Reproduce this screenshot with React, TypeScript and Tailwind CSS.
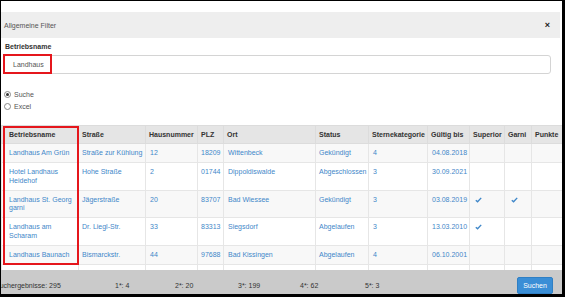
import React from 'react';

interface Row {
    name: string[];
    street: string;
    nr: string;
    plz: string;
    ort: string;
    status: string;
    stars: string;
    until: string;
    superior: boolean;
    garni: boolean;
}

const rows: Row[] = [
    { name: ['Landhaus Am Grün'], street: 'Straße zur Kühlung', nr: '12', plz: '18209', ort: 'Wittenbeck', status: 'Gekündigt', stars: '4', until: '04.08.2018', superior: false, garni: false },
    { name: ['Hotel Landhaus', 'Heidehof'], street: 'Hohe Straße', nr: '2', plz: '01744', ort: 'Dippoldiswalde', status: 'Abgeschlossen', stars: '3', until: '30.09.2021', superior: false, garni: false },
    { name: ['Landhaus St. Georg', 'garni'], street: 'Jägerstraße', nr: '20', plz: '83707', ort: 'Bad Wiessee', status: 'Gekündigt', stars: '3', until: '03.08.2019', superior: true, garni: true },
    { name: ['Landhaus am', 'Scharam'], street: 'Dr. Liegl-Str.', nr: '33', plz: '83313', ort: 'Siegsdorf', status: 'Abgelaufen', stars: '3', until: '13.03.2010', superior: true, garni: false },
    { name: ['Landhaus Baunach'], street: 'Bismarckstr.', nr: '44', plz: '97688', ort: 'Bad Kissingen', status: 'Abgelaufen', stars: '4', until: '06.10.2001', superior: false, garni: false },
    { name: ['Hotel Landhaus', 'Wildenburg'], street: 'Crottorfer Straße', nr: '57', plz: '51580', ort: 'Reichshof', status: 'Gekündigt', stars: '3', until: '30.04.2008', superior: true, garni: false },
];

const headers = ['Betriebsname', 'Straße', 'Hausnummer', 'PLZ', 'Ort', 'Status', 'Sternekategorie', 'Gültig bis', 'Superior', 'Garni', 'Punkte'];

const Check = () => (
    <svg width="7" height="6" viewBox="0 0 7 6" className="inline-block">
        <path d="M0.8 3.2 L2.6 4.8 L6.2 0.9" fill="none" stroke="#3f87c9" strokeWidth="1.4" />
    </svg>
);

export default function App() {
    const cell = 'border border-[#e6e6e6] px-[3px] pt-[5px] pb-[4.5px] leading-[8.5px] align-top text-[#3f87c9] font-normal';

    return (
        <div className="relative w-[565px] h-[297px] overflow-hidden bg-black font-['Liberation_Sans',Arial,sans-serif] text-[7px] leading-[9px]">
            <div className="ml-[1px] mt-[1px] w-[561px] h-[293px] bg-white flex flex-col overflow-hidden">
                {/* Modal header */}
                <div className="mt-[11px] h-[26px] w-[559px] bg-[#eeeeee] flex items-center justify-between pl-[3px] pr-[10px] text-[#555]">
                    <span>Allgemeine Filter</span>
                    <span className="text-[9px] font-bold text-[#222]">×</span>
                </div>

                <div className="mt-[4px] pl-[4px] h-[9px] font-bold text-[#333]">Betriebsname</div>
                <div className="mt-[4px] ml-[2px] w-[548px] h-[19px] border border-[#d4d4d4] rounded-[3px] flex items-center pl-[9px] text-[#555]">
                    Landhaus
                </div>

                {/* Radios */}
                <div className="mt-[15px] pl-[3px] flex flex-col gap-[2px] text-[#555]">
                    <label className="flex items-center h-[10px]">
                        <span className="w-[7px] h-[7px] rounded-full border border-[#888] flex items-center justify-center mr-[3px]">
                            <span className="w-[3px] h-[3px] rounded-full bg-[#333]"></span>
                        </span>
                        Suche
                    </label>
                    <label className="flex items-center h-[10px]">
                        <span className="w-[7px] h-[7px] rounded-full border border-[#888] mr-[3px]"></span>
                        Excel
                    </label>
                </div>

                {/* Result table */}
                <div className="mt-[14px] h-[145px] overflow-hidden">
                    <table className="table-fixed w-[561px] border-collapse">
                        <colgroup>
                            <col className="w-[77px]" />
                            <col className="w-[67px]" />
                            <col className="w-[52px]" />
                            <col className="w-[26px]" />
                            <col className="w-[92px]" />
                            <col className="w-[53px]" />
                            <col className="w-[59px]" />
                            <col className="w-[42px]" />
                            <col className="w-[35px]" />
                            <col className="w-[27px]" />
                            <col className="w-[31px]" />
                        </colgroup>
                        <thead>
                            <tr className="bg-[#e5e5e5] h-[18px]">
                                {headers.map((h, i) => (
                                    <th key={h} className={`border border-[#dcdcdc] py-0 text-left font-bold text-[#333] whitespace-nowrap ${i === 0 ? 'pl-[7px]' : 'pl-[3px]'}`}>
                                        {h}
                                    </th>
                                ))}
                            </tr>
                        </thead>
                        <tbody>
                            {rows.map((r, i) => (
                                <tr key={r.plz} className={i % 2 === 0 ? 'bg-[#f8f8f8]' : 'bg-white'}>
                                    <td className={`${cell} pl-[7px]`}>
                                        {r.name.map((n) => (
                                            <div key={n}>{n}</div>
                                        ))}
                                    </td>
                                    <td className={`${cell} whitespace-nowrap`}>{r.street}</td>
                                    <td className={`${cell} pl-[4px]`}>{r.nr}</td>
                                    <td className={cell}>{r.plz}</td>
                                    <td className={`${cell} pl-[4px]`}>{r.ort}</td>
                                    <td className={cell}>{r.status}</td>
                                    <td className={`${cell} pl-[4px]`}>{r.stars}</td>
                                    <td className={`${cell} pl-[4px]`}>{r.until}</td>
                                    <td className={`${cell} pl-[5px]`}>{r.superior && <Check />}</td>
                                    <td className={`${cell} pl-[6px]`}>{r.garni && <Check />}</td>
                                    <td className={cell}></td>
                                </tr>
                            ))}
                        </tbody>
                    </table>
                </div>

                {/* Footer */}
                <div className="flex-1 bg-[#cacaca] flex items-start text-[#333] overflow-hidden">
                    <div className="mt-[11px] w-[114px] whitespace-nowrap">
                        <span className="-ml-[6px]">Suchergebnisse: 295</span>
                    </div>
                    <div className="mt-[11px] w-[60px]">1*: 4</div>
                    <div className="mt-[11px] w-[63px]">2*: 20</div>
                    <div className="mt-[11px] w-[62px]">3*: 199</div>
                    <div className="mt-[11px] w-[65px]">4*: 62</div>
                    <div className="mt-[11px]">5*: 3</div>
                    <button className="ml-auto mr-[9px] mt-[7px] w-[36px] h-[17px] bg-[#3a8ed6] border border-[#2f7fc4] rounded-[2px] text-white text-[7px]">
                        Suchen
                    </button>
                </div>
            </div>

            {/* Red annotation boxes */}
            <div className="absolute left-[3px] top-[54px] w-[49px] h-[20px] border-2 border-[#e5161c] pointer-events-none"></div>
            <div className="absolute left-[3px] top-[126px] w-[76px] h-[139px] border-2 border-[#e5161c] pointer-events-none"></div>
        </div>
    );
}
